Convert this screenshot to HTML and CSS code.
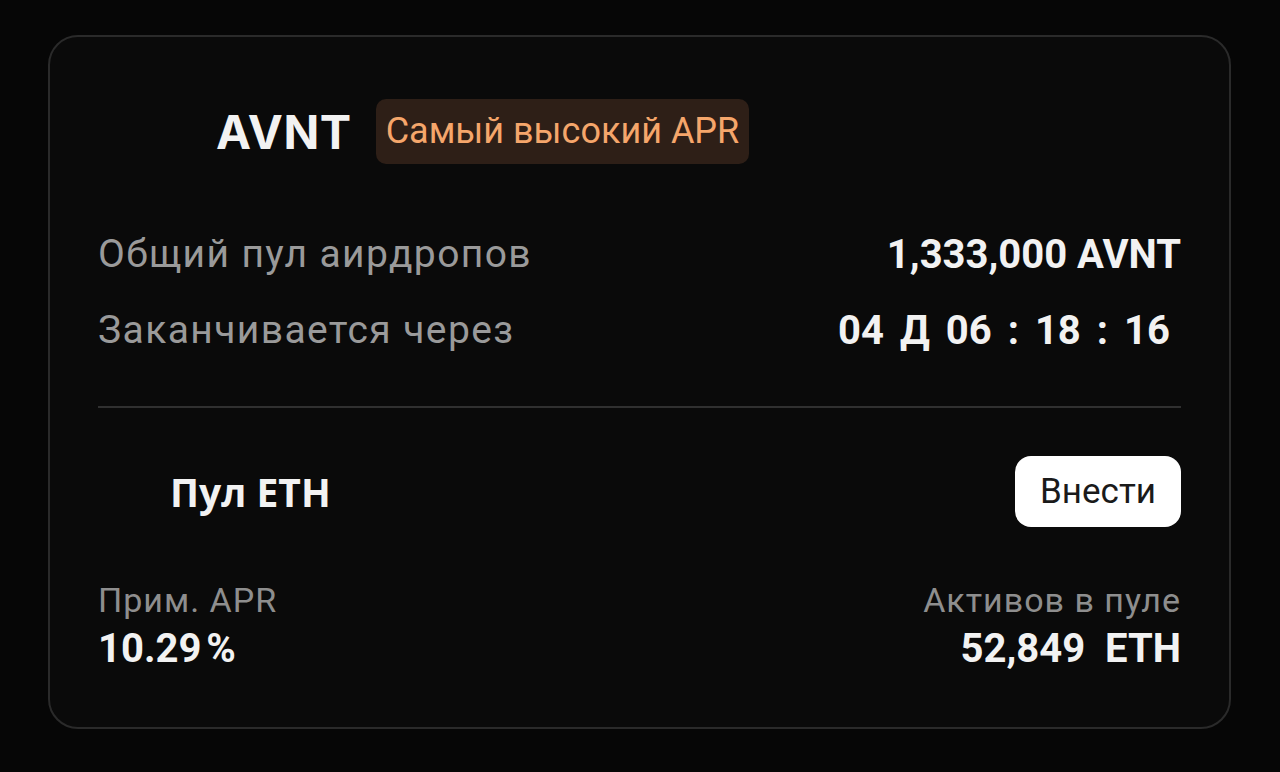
FILE: index.html
```html
<!DOCTYPE html>
<html>
<head>
<meta charset="UTF-8">
<meta name="viewport" content="width=device-width, initial-scale=1">
<link rel="stylesheet" href="styles.css">
</head>
<body>

<div class="card">
	<div class="head">
		<span class="head-title">AVNT</span>
		<span class="badge">Самый высокий APR</span>
	</div>

	<div class="row">
		<span class="label">Общий пул аирдропов</span>
		<span class="value">1,333,000 AVNT</span>
	</div>
	<div class="row">
		<span class="label">Заканчивается через</span>
		<span class="value timer">
			<span>04</span><span>Д</span><span>06</span><span>:</span><span>18</span><span>:</span><span>16</span>
		</span>
	</div>

	<div class="divider"></div>

	<div class="pool">
		<span class="pool-title">Пул ETH</span>
		<button class="pool-btn">Внести</button>
	</div>

	<div class="stats">
		<div class="stat">
			<div class="stat-label">Прим. APR</div>
			<div class="stat-value">10.29&#8239;%</div>
		</div>
		<div class="stat right">
			<div class="stat-label">Активов в пуле</div>
			<div class="stat-value">52,849&nbsp; ETH</div>
		</div>
	</div>
</div>

</body>
</html>
```

FILE: styles.css
```css
* {
	box-sizing: border-box;
}

body {
	margin: 0;
	background-color: #060606;
	font-family: Roboto, "Liberation Sans", sans-serif;
	color: #f2f2f2;
}

.card {
	margin: 35px 0 0 48px;
	width: 1183px;
	height: 694px;
	border: 2px solid #2a2a2a;
	border-radius: 30px;
	background-color: #0a0a0a;
	padding: 62px 48px 0 48px;
}

.head {
	display: flex;
	align-items: center;
	height: 65px;
	padding-left: 118px;
	gap: 24px;
}

.head-title {
	font-family: Inter, Roboto, sans-serif;
	font-weight: 700;
	font-size: 47px;
	letter-spacing: 0.5px;
}

.badge {
	background-color: #2e1f17;
	color: #f5a66b;
	border-radius: 10px;
	height: 65px;
	line-height: 65px;
	padding: 0 10px;
	font-size: 36px;
}

.row {
	display: flex;
	justify-content: space-between;
	align-items: center;
	height: 76px;
}

.head + .row {
	margin-top: 52px;
}

.label {
	color: #9a9a9a;
	font-size: 39px;
	letter-spacing: 1.4px;
}

.value {
	font-weight: 700;
	font-size: 40px;
}

.timer {
	display: flex;
	gap: 16px;
	margin-right: 11px;
}

.divider {
	height: 2px;
	background-color: #303030;
	margin-top: 38px;
}

.pool {
	display: flex;
	justify-content: space-between;
	align-items: center;
	margin-top: 48px;
	height: 71px;
}

.pool-title {
	padding-left: 72px;
	font-family: "Open Sans", Roboto, sans-serif;
	font-weight: 700;
	font-size: 39px;
}

.pool-btn {
	width: 166px;
	height: 71px;
	border: none;
	border-radius: 16px;
	background-color: #ffffff;
	color: #1a1a1a;
	font-family: Roboto, sans-serif;
	font-size: 35px;
	padding: 0;
}

.stats {
	display: flex;
	justify-content: space-between;
	margin-top: 49px;
}

.stat.right {
	text-align: right;
}

.stat-label {
	color: #8e8e8e;
	font-size: 34px;
	letter-spacing: 1px;
	line-height: 48px;
}

.stat-value {
	font-weight: 700;
	font-size: 40px;
	line-height: 50px;
}
```
